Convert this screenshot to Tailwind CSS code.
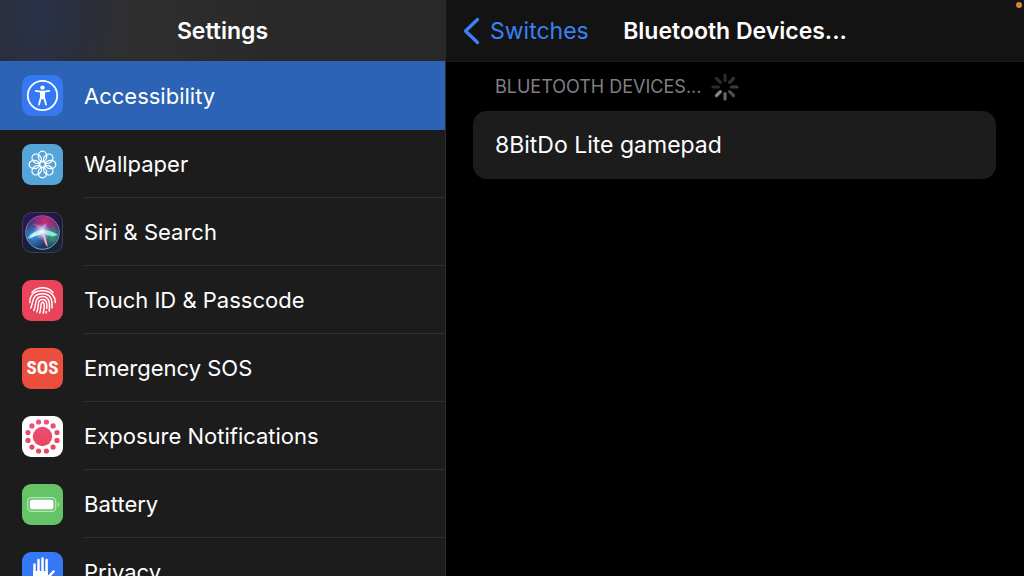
<!DOCTYPE html>
<html lang="en">
<head>
<meta charset="utf-8">
<meta name="viewport" content="width=device-width, initial-scale=1">
<title>Settings</title>
<script src="https://cdn.jsdelivr.net/npm/@tailwindcss/browser@4"></script>
</head>
<body class="grid h-screen grid-cols-[223fr_289fr] overflow-hidden bg-black font-['Inter','Liberation_Sans',sans-serif] text-[23px] leading-7 text-white">

<aside class="flex min-h-0 flex-col overflow-hidden border-r border-[#2a2a2a] bg-[#1c1c1c]">
  <header class="flex h-[61px] shrink-0 items-center justify-center bg-[#282828] bg-[radial-gradient(ellipse_90px_160px_at_36px_18px,#29324a,#2b2e3a_55%,transparent),linear-gradient(90deg,#303031_20%,#2d2d2d_40%,#282828_65%)]">
    <h1 class="font-semibold">Settings</h1>
  </header>
  <nav aria-label="Settings" class="text-[22px]">
    <ul>
      <li><a href="#accessibility" aria-current="page" class="flex h-[69px] items-center gap-[21px] bg-[#2c63b5] pl-[22px]">
        <svg class="size-[41px] shrink-0" viewBox="0 0 41 41" aria-hidden="true">
          <rect x=".5" y=".5" width="40" height="40" rx="9" fill="#3478f6" stroke="#4a83e8" stroke-width=".6"/>
          <circle cx="20.500" cy="20.500" r="14.700" fill="none" stroke="#fff" stroke-width="1.800"/>
          <circle cx="20.500" cy="12.600" r="2.200" fill="#fff"/>
          <path d="M13.700 15.900 18.600 16.700H22.400L27.300 15.900M19 17V22L17 29.600M22 17V22L24 29.600" fill="none" stroke="#fff" stroke-width="1.800" stroke-linecap="round" stroke-linejoin="round"/>
          <path d="M18.300 16.300h4.400v6l-.8 2h-2.800l-.8-2z" fill="#fff"/>
        </svg>
        <span>Accessibility</span></a></li>

      <li><a href="#wallpaper" class="flex h-[68px] items-center gap-[21px] pl-[22px]">
        <svg class="size-[41px] shrink-0" viewBox="0 0 41 41" aria-hidden="true">
          <rect width="41" height="41" rx="9" fill="#55a5d9"/>
          <g fill="none" stroke="#fff" stroke-width="1.300">
            <circle cx="20.500" cy="20.500" r="2.800"/>
            <g id="petals">
              <ellipse cx="20.500" cy="12.300" rx="4.200" ry="5.100"/>
              <ellipse cx="20.500" cy="12.300" rx="4.200" ry="5.100" transform="rotate(45 20.500 20.500)"/>
              <ellipse cx="20.500" cy="12.300" rx="4.200" ry="5.100" transform="rotate(90 20.500 20.500)"/>
              <ellipse cx="20.500" cy="12.300" rx="4.200" ry="5.100" transform="rotate(135 20.500 20.500)"/>
              <ellipse cx="20.500" cy="12.300" rx="4.200" ry="5.100" transform="rotate(180 20.500 20.500)"/>
              <ellipse cx="20.500" cy="12.300" rx="4.200" ry="5.100" transform="rotate(225 20.500 20.500)"/>
              <ellipse cx="20.500" cy="12.300" rx="4.200" ry="5.100" transform="rotate(270 20.500 20.500)"/>
              <ellipse cx="20.500" cy="12.300" rx="4.200" ry="5.100" transform="rotate(315 20.500 20.500)"/>
            </g>
          </g>
        </svg>
        <span class="flex h-full grow items-center border-b border-[#313132]">Wallpaper</span></a></li>

      <li><a href="#siri" class="flex h-[68px] items-center gap-[21px] pl-[22px]">
        <svg class="size-[41px] shrink-0" viewBox="0 0 41 41" aria-hidden="true">
          <defs>
            <linearGradient id="siriTile" x1="0" y1="0" x2=".6" y2="1"><stop stop-color="#2b1a5c"/><stop offset=".5" stop-color="#1c1a3c"/><stop offset="1" stop-color="#18243a"/></linearGradient>
            <radialGradient id="siriPink" gradientUnits="userSpaceOnUse" cx="23" cy="10" r="17"><stop stop-color="#c9306e"/><stop offset=".65" stop-color="#8a2d86" stop-opacity=".8"/><stop offset="1" stop-color="#5a2d86" stop-opacity="0"/></radialGradient>
            <radialGradient id="siriBlue" gradientUnits="userSpaceOnUse" cx="11" cy="24" r="14"><stop stop-color="#3894e0"/><stop offset="1" stop-color="#3894e0" stop-opacity="0"/></radialGradient>
            <radialGradient id="siriGreen" gradientUnits="userSpaceOnUse" cx="30" cy="24" r="12"><stop stop-color="#38a884"/><stop offset="1" stop-color="#38a884" stop-opacity="0"/></radialGradient>
            <radialGradient id="siriGlow" gradientUnits="userSpaceOnUse" cx="20" cy="20" r="9"><stop stop-color="#fff"/><stop offset=".4" stop-color="#cdeaff" stop-opacity=".65"/><stop offset="1" stop-color="#a9c6f5" stop-opacity="0"/></radialGradient>
            <linearGradient id="siriRim" x2="0" y2="1"><stop stop-color="#c24a92"/><stop offset=".5" stop-color="#7a8fd0"/><stop offset="1" stop-color="#66b9b6"/></linearGradient>
          </defs>
          <rect x=".5" y=".5" width="40" height="40" rx="9" fill="url(#siriTile)" stroke="#454264" stroke-width=".8"/>
          <circle cx="20.500" cy="20.500" r="16.500" fill="#293263"/>
          <circle cx="20.500" cy="20.500" r="16.500" fill="url(#siriPink)"/>
          <circle cx="20.500" cy="20.500" r="16.500" fill="url(#siriBlue)"/>
          <circle cx="20.500" cy="20.500" r="16.500" fill="url(#siriGreen)"/>
          <path d="M11 12Q19 12 23 19L26 35Q21 29 19 22Q17 15 11 12" fill="#ed5b9d" opacity=".65"/>
          <path d="M25 11Q24 18 18 23Q15 22 17 18Q20 13 25 11" fill="#bc8ce8" opacity=".75"/>
          <path d="M5 27Q10 18 21 18Q29 18 36 23Q29 26 21 21Q14 21 5 27" fill="#93f4df" opacity=".9"/>
          <path d="M7 27Q13 18 21 19L18 23Q14 23 7 27" fill="#d6f8ff"/>
          <path d="M21 20Q25 28 25.500 35Q22 32 21 20" fill="#f5b2cd"/>
          <circle cx="20" cy="20" r="9" fill="url(#siriGlow)"/>
          <circle cx="20.500" cy="20.500" r="16.800" fill="none" stroke="url(#siriRim)"/>
        </svg>
        <span class="flex h-full grow items-center border-b border-[#313132]">Siri &amp; Search</span></a></li>

      <li><a href="#touch-id" class="flex h-[68px] items-center gap-[21px] pl-[22px]">
        <svg class="size-[41px] shrink-0" viewBox="0 0 41 41" aria-hidden="true">
          <rect width="41" height="41" rx="9" fill="#ea445a"/>
          <g fill="none" stroke="#fff" stroke-width="1.500" stroke-linecap="round">
            <path d="M10 12.500Q14 7.800 20.500 7.800T31 12.500"/>
            <path d="M7.800 22.500C7.500 18 9.500 10.800 20.500 10.800C30 10.800 33.500 17.500 33.200 22.500"/>
            <path d="M8.800 28C11.500 22 9.500 13.800 20.500 13.800C29 13.800 30.500 20 30 28"/>
            <path d="M11.800 30.500C14.500 25 12 16.600 20.500 16.600C27.500 16.600 28 23 27.200 31"/>
            <path d="M14.800 32C17.500 26 14.500 19.400 20.500 19.400C25 19.400 25.200 24 24.700 28.500"/>
            <path d="M17.700 33C19.500 29 18 22.200 20.500 22.200C23 22.200 22.500 28 21.200 33.200"/>
            <path d="M24.300 31.500 24 33"/>
          </g>
        </svg>
        <span class="flex h-full grow items-center border-b border-[#313132]">Touch ID &amp; Passcode</span></a></li>

      <li><a href="#sos" class="flex h-[68px] items-center gap-[21px] pl-[22px]">
        <span class="flex size-[41px] shrink-0 items-center justify-center rounded-[9px] bg-[#eb4e3d] font-['Liberation_Sans_Narrow','Roboto_Condensed','Roboto',sans-serif] text-[19px] font-bold" aria-hidden="true">SOS</span>
        <span class="flex h-full grow items-center border-b border-[#313132]">Emergency SOS</span></a></li>

      <li><a href="#exposure" class="flex h-[68px] items-center gap-[21px] pl-[22px]">
        <svg class="size-[41px] shrink-0" viewBox="0 0 41 41" aria-hidden="true">
          <defs><linearGradient id="expo" gradientUnits="userSpaceOnUse" x1="0" y1="4" x2="0" y2="37"><stop stop-color="#ec5283"/><stop offset=".5" stop-color="#eb4965"/><stop offset="1" stop-color="#e9445a"/></linearGradient></defs>
          <rect width="41" height="41" rx="9" fill="#fff"/>
          <g fill="url(#expo)">
            <circle cx="20.500" cy="20.500" r="9.700"/>
            <circle cx="24.400" cy="6" r="2.600"/><circle cx="31.100" cy="9.900" r="2.600"/><circle cx="35" cy="16.600" r="2.600"/><circle cx="35" cy="24.400" r="2.600"/>
            <circle cx="31.100" cy="31.100" r="2.600"/><circle cx="24.400" cy="35" r="2.600"/><circle cx="16.600" cy="35" r="2.600"/><circle cx="9.900" cy="31.100" r="2.600"/>
            <circle cx="6" cy="24.400" r="2.600"/><circle cx="6" cy="16.600" r="2.600"/><circle cx="9.900" cy="9.900" r="2.600"/><circle cx="16.600" cy="6" r="2.600"/>
          </g>
        </svg>
        <span class="flex h-full grow items-center border-b border-[#313132]">Exposure Notifications</span></a></li>

      <li><a href="#battery" class="flex h-[68px] items-center gap-[21px] pl-[22px]">
        <svg class="size-[41px] shrink-0" viewBox="0 0 41 41" aria-hidden="true">
          <rect width="41" height="41" rx="9" fill="#65c466"/>
          <rect x="5.700" y="13.700" width="28" height="13.600" rx="3.800" fill="none" stroke="#b5e3b5" stroke-width="1.300"/>
          <rect x="8" y="15.700" width="23.400" height="9.600" rx="1.800" fill="#fff"/>
          <path d="M35.700 18.300Q37.300 18.900 37.300 20.500T35.700 22.700Z" fill="#b5e3b5"/>
        </svg>
        <span class="flex h-full grow items-center border-b border-[#313132]">Battery</span></a></li>

      <li><a href="#privacy" class="flex h-[68px] items-center gap-[21px] pl-[22px]">
        <svg class="size-[41px] shrink-0" viewBox="0 0 41 41" aria-hidden="true">
          <rect width="41" height="41" rx="9" fill="#3478f6"/>
          <g fill="none" stroke="#fff" stroke-width="2.500" stroke-linecap="round">
            <path d="M12.500 12.500V24M16.500 8V22M20.500 6.500V22M24.600 8V22M25.500 26 31.500 19.500"/>
          </g>
          <path d="M11.250 19H25.850V24L29 21V26Q25 34 19 34Q11.250 34 11.250 25Z" fill="#fff"/>
        </svg>
        <span class="flex h-full grow items-center">Privacy</span></a></li>
    </ul>
  </nav>
</aside>

<main class="min-w-0">
  <header class="relative grid h-[62px] grid-cols-[1fr_auto_1fr] items-center border-b border-[#1a1a1a] bg-[#131313]">
    <a href="#switches" class="flex items-center gap-[10px] pl-[17px] text-[#3a80f6]">
      <svg class="h-7 w-[17px] shrink-0" viewBox="0 0 17 28" fill="none" stroke="currentColor" stroke-width="3.300" stroke-linecap="round" stroke-linejoin="round" aria-hidden="true"><path d="M14.500 2.500 2.500 14 14.500 25.500"/></svg>
      <span>Switches</span>
    </a>
    <h2 class="font-semibold">Bluetooth Devices...</h2>
    <span class="absolute top-[2px] right-[2px] size-[6px] rounded-full bg-[#d08a2e]" role="status" aria-label="Microphone in use"></span>
  </header>
  <section class="pr-7 pl-[27px]" aria-labelledby="devices">
    <div class="flex h-[49px] items-center gap-[10px] pl-[22px]">
      <h3 id="devices" class="text-[18px] text-[#7f7f84]">BLUETOOTH DEVICES...</h3>
      <svg class="size-7" viewBox="0 0 28 28" fill="none" stroke-width="3.200" stroke-linecap="round" role="img" aria-label="Searching">
        <path d="M14 2V7.500" stroke="#2b2b2d"/>
        <path d="M22.500 5.500 18.600 9.400" stroke="#323234"/>
        <path d="M26 14H20.500" stroke="#3b3b3d"/>
        <path d="M22.500 22.500 18.600 18.600" stroke="#4e4e51"/>
        <path d="M14 26V20.500" stroke="#68686c"/>
        <path d="M5.500 22.500 9.400 18.600" stroke="#838388"/>
        <path d="M2 14H7.500" stroke="#2b2b2d"/>
        <path d="M5.500 5.500 9.400 9.400" stroke="#2b2b2d"/>
      </svg>
    </div>
    <button type="button" class="flex h-[68px] w-full items-center rounded-[14px] bg-[#1c1c1c] pl-[22px] text-left">8BitDo Lite gamepad</button>
  </section>
</main>
</body>
</html>
